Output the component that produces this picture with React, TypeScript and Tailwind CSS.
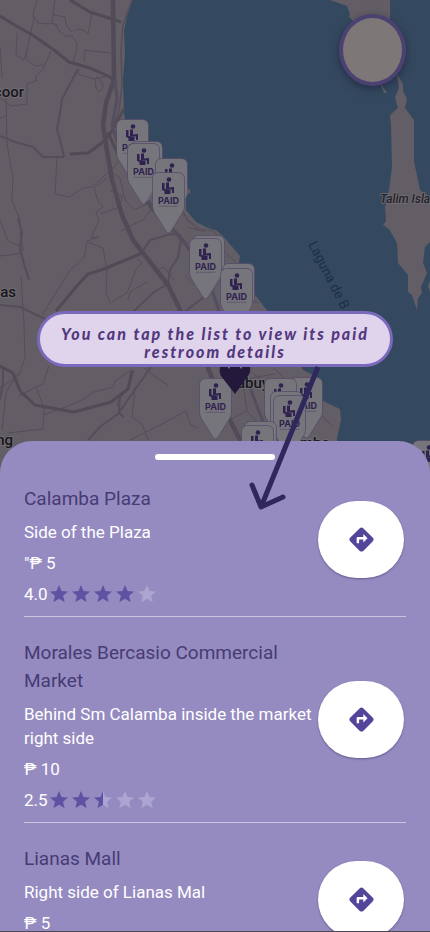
import React from "react";
import { MdDirections, MdStar } from "react-icons/md";

type Place = {
  name: string;
  description: string;
  price: string;
  rating: number;
};

const places: Place[] = [
  { name: "Calamba Plaza", description: "Side of the Plaza", price: '"₱ 5', rating: 4 },
  {
    name: "Morales Bercasio Commercial Market",
    description: "Behind Sm Calamba inside the market right side",
    price: "₱ 10",
    rating: 2.5,
  },
  { name: "Lianas Mall", description: "Right side of Lianas Mal", price: "₱ 5", rating: 4 },
];

type PinSpot = { x: number; y: number; covered?: boolean };

const pins: PinSpot[] = [
  { x: 116, y: 119 },
  { x: 130, y: 141, covered: true },
  { x: 127, y: 143 },
  { x: 155, y: 158, covered: true },
  { x: 152, y: 172 },
  { x: 192, y: 235, covered: true },
  { x: 189, y: 238 },
  { x: 222, y: 263, covered: true },
  { x: 220, y: 268 },
  { x: 199, y: 378 },
  { x: 290, y: 377 },
  { x: 264, y: 378, covered: true },
  { x: 270, y: 391, covered: true },
  { x: 273, y: 395 },
  { x: 244, y: 421, covered: true },
  { x: 241, y: 425, covered: true },
  { x: 412, y: 440, covered: true },
];

const thinRoads = [
  "M37 0L33 13L34 18L30 35L26 56L28 61L35 66L44 65",
  "M17 33L16 55L24 60L27 50",
  "M33 15L38 23L47 24L52 23L57 25L58 30L66 36L72 36L77 43L76 52L73 63",
  "M52 22L55 0M75 31C78 27 84 30 88 34L92 13",
  "M72 32L66 25L65 17L54 15M110 53L85 50L84 62",
  "M51 51L43 69L36 76L36 81L27 84L27 104L11 106L0 98",
  "M78 68L78 74L94 79L108 76",
  "M96 78C93 92 103 96 103 84L98 77L96 78",
  "M0 47L2 78M0 118L6 116M6 95L7 144L13 178L12 200L20 220L21 240L23 250L18 254L0 256",
  "M57 158L55 194L69 197L83 188L92 187L104 176L110 171L120 160",
  "M107 178L94 188L98 201L103 207L96 212L99 220L91 238L99 237L87 241L84 258L70 270L62 283L42 315",
  "M88 242L103 248L107 271L106 293L110 303L127 293L136 270L142 263L137 259",
  "M100 214L120 207L122 196L110 190M112 172L120 178L125 200L134 210L147 204L141 191",
  "M121 231L144 219L150 211L176 209L185 216",
  "M21 276L24 325L25 358L19 375L0 388",
  "M49 366L43 384L36 387L19 396M36 387L44 408L43 429L8 433M17 375L6 392L2 430",
  "M43 415L66 407L82 400L94 392L113 387L115 381L127 373L132 370",
  "M134 370L129 386L118 401L117 406M135 387L132 417L142 424L148 440",
  "M130 440L162 424L186 411L190 424L197 428",
  "M128 300L130 292L147 282M155 271L164 267L174 280M185 276L194 285",
  "M186 219L199 231M207 223L222 241M217 245L241 267M245 299L259 303",
  "M244 390L251 378L275 374M242 377L247 411L261 426M219 426L246 411",
  "M245 367L264 382M273 367L284 378M304 423L320 414L332 426M320 414L309 404L312 393",
  "M180 205L187 219L200 229L212 231M187 227L206 232",
  "M0 220L8 241L19 246M143 367L153 375L168 385",
];

const mediumRoads = [
  "M78 69L62 99L60 113L57 129L61 144L64 157",
  "M0 136L15 142L33 147L43 157L64 157",
  "M18 218L22 232L20 248L24 264L29 280",
  "M0 305L20 307L47 320",
  "M3 366L3 383L0 400",
  "M88 440L101 426L118 414L134 391L151 367",
  "M181 240L178 257L170 270L168 284L154 292L133 312",
  "M141 254L150 240L171 234L181 235",
  "M120 394L119 413L124 417M193 306L184 312L207 295",
];

const wideRoads = [
  "M0 16L13 24L34 36L54 50L69 62L90 68L110 77L117 84",
  "M70 0L90 12L112 19L121 22",
  "M70 154L88 153L103 142L110 134L124 109",
  "M0 366L13 373L20 391L35 405L74 412L111 402L128 389L132 371",
  "M56 311L76 287L88 274L104 269L142 253",
  "M108 132L118 155L133 177L151 208L170 226L187 245",
];

function Pin({ x, y, covered }: PinSpot) {
  return (
    <g transform={`translate(${x} ${y})`}>
      <path
        d="M7 .5H26Q32.500 .5 32.500 7V34Q32.500 37 31 40L18.500 60Q16.500 62 14.500 60L2 40Q.5 37 .5 34V7Q.5 .5 7 .5Z"
        fill="#76757b"
        stroke="#514767"
        strokeWidth="0.7"
      />
      <g fill="#30224f">
        <circle cx="17" cy="7.500" r="2.300" />
        <path d="M14 10.500H17V15.500L22 15V21H20V17.500H14Z" />
        <path d="M10 11H12.500V17L18.500 18V22H12.500V19L10 18Z" />
      </g>
      {!covered && (
        <text x="16.500" y="32" textAnchor="middle" fontSize="9" fontWeight="700" fill="#30224f" className="font-['Inter',sans-serif]">
          PAID
        </text>
      )}
      <path d="M7 34.300H26" stroke="#4d4265" strokeWidth="0.7" strokeDasharray="1.500 .5" />
    </g>
  );
}

function MapView() {
  return (
    <svg
      className="absolute inset-x-0 top-0 h-[480px] w-full font-['Roboto',sans-serif]"
      viewBox="0 0 430 480"
      preserveAspectRatio="xMidYMin slice"
      role="img"
      aria-label="Map of paid restrooms around Laguna de Bay"
    >
      <rect width="430" height="480" fill="#635d65" />
      <path
        d="M132 0L127 16L124 31L125 54L123 79L124 113L126 125L155 158L188 188L191 192L186 195L186 210L196 222L210 229L216 230L223 236L240 256L239 263L247 279L255 295L266 309L280 324L303 370L319 378L323 401L340 409L341 420L337 438V480H430V0Z"
        fill="#34495f"
      />
      <g fill="#635d65">
        <path d="M330 0L347 6L350 14L349 17L353 21H390V0Z" />
        <path d="M380 82L387 93L384 93L382 88Z" />
        <path d="M397 74L403 84L403 91L407 99L405 108L414 120L414 161L420 190L430 197V242L425 247L423 263L427 273L421 287L422 293L418 298L417 310L412 295L408 292V275L398 263L397 243L389 229L383 225L386 221L385 207L389 190L392 167L391 127L390 115L398 108L395 97L399 88Z" />
        <path d="M430 281L428 286L430 292Z" />
      </g>
      <g fill="none" stroke="#554e5a" strokeLinejoin="round">
        <g strokeWidth="1">{thinRoads.map((d) => <path key={d} d={d} />)}</g>
        <g strokeWidth="2">{mediumRoads.map((d) => <path key={d} d={d} />)}</g>
        <g strokeWidth="3" stroke="#514b56">{wideRoads.map((d) => <path key={d} d={d} />)}</g>
        <path d="M113 0L114 80L106 103L103 125L106 145L112 180L122 215L133 240L150 262L168 285L185 320L208 368L225 410L245 450" strokeWidth="4.500" stroke="#514b58" />
        <path d="M115 80L117 100L112 125L120 150L152 207L186 245L207 275L222 320L249 385L270 440" strokeWidth="3" stroke="#554d60" />
        <path d="M132 0L123 25L121 50L122 85L119 110L112 130" strokeWidth="1.500" />
      </g>
      <g fontWeight="500" fontSize="15" fill="#17161a" stroke="#716c73" strokeWidth="2" paintOrder="stroke">
        <text x="24" y="97" textAnchor="end">coor</text>
        <text x="16" y="297" textAnchor="end">as</text>
        <text x="13" y="445" textAnchor="end">ng</text>
        <text x="237" y="388">abuy</text>
        <text x="300" y="448">mba</text>
      </g>
      <text x="380" y="203" fontSize="12" fontStyle="italic" fontWeight="500" fill="#222126" stroke="#716c73" strokeWidth="1.500" paintOrder="stroke">
        Talim Isla
      </text>
      <text transform="translate(308 244) rotate(63)" fontSize="13.500" fill="#1b2f47">
        Laguna de B
      </text>
      {pins.map((pin) => <Pin key={`${pin.x}-${pin.y}`} {...pin} />)}
      <path d="M235 394L221 376Q219 372 220 366H250Q251 372 248 376Z" fill="#24183b" />
      <path d="M227 366L229 369L231 366M239 366L241 369L243 366" fill="#777" />
    </svg>
  );
}

function Stars({ rating }: { rating: number }) {
  return (
    <div className="flex" role="img" aria-label={`${rating} out of 5 stars`}>
      {[0, 1, 2, 3, 4].map((i) => (
        <span key={i} className="relative block size-[22px]">
          <MdStar className="size-[22px] text-[#aca4d1]" />
          <span
            className="absolute inset-y-0 left-0 overflow-hidden"
            style={{ width: `${Math.max(0, Math.min(1, rating - i)) * 100}%` }}
          >
            <MdStar className="size-[22px] text-[#6052a2]" />
          </span>
        </span>
      ))}
    </div>
  );
}

function PlaceRow({ place }: { place: Place }) {
  return (
    <li className="flex items-center gap-1 border-b border-[#c9c4e0] pr-0.5">
      <div className="flex min-w-0 flex-1 flex-col gap-[7px] pt-[22px] pb-[10px] text-[17px] leading-6 text-white">
        <h2 className="text-[19px] leading-7 text-[#473b73]">{place.name}</h2>
        <p>{place.description}</p>
        <p>{place.price}</p>
        <div className="flex items-center">
          <span>{place.rating.toFixed(1)}</span>
          <Stars rating={place.rating} />
        </div>
      </div>
      <button
        type="button"
        aria-label={`Directions to ${place.name}`}
        className="flex h-[77px] w-[86px] shrink-0 items-center justify-center rounded-[40px] bg-white text-[#54459a] shadow-[0_1px_2px_rgba(40,30,80,0.45)]"
      >
        <MdDirections className="size-[29px]" />
      </button>
    </li>
  );
}

export default function App() {
  return (
    <main className="relative flex h-screen flex-col overflow-hidden border-b border-[#4a4652] bg-[#635d65] font-['Roboto',sans-serif]">
      <MapView />
      <div className="relative flex min-h-0 flex-1 flex-col items-end justify-between px-[37px] pb-[74px]">
        <button
          type="button"
          aria-label="Profile"
          className="mt-[14px] mr-[-13px] h-[72px] w-[67px] shrink-0 rounded-[50%] border-4 border-[#4c4272] bg-[#7d7777] shadow-[0_3px_8px_rgba(20,20,50,0.5)]"
        />
        <p className="flex h-14 w-full shrink-0 items-center justify-center rounded-full border-3 border-[#7a69bd] bg-[#e0d4ec] px-5 pt-2 text-center font-['Lato',sans-serif] text-base leading-[18px] font-black tracking-[2px] text-[#54397f] italic">
          You can tap the list to view its paid restroom details
        </p>
      </div>
      <section
        aria-label="Paid restrooms"
        className="relative h-[490px] shrink-0 overflow-hidden rounded-t-[32px] bg-[#958bc1] px-6 pt-[13px]"
      >
        <div className="mx-auto mb-[3px] h-1.5 w-[120px] rounded-full bg-white" />
        <ul>
          {places.map((place) => <PlaceRow key={place.name} place={place} />)}
        </ul>
      </section>
      <svg
        className="pointer-events-none absolute bottom-[420px] left-1/2 h-[146px] w-20 translate-x-[31px]"
        viewBox="246 366 80 146"
        fill="none"
        stroke="#30275c"
        strokeWidth="5"
        strokeLinecap="round"
        strokeLinejoin="round"
        aria-hidden="true"
      >
        <path d="M318 368L261 508" strokeLinecap="butt" />
        <path d="M252 486L261 508L283 498" />
      </svg>
    </main>
  );
}
